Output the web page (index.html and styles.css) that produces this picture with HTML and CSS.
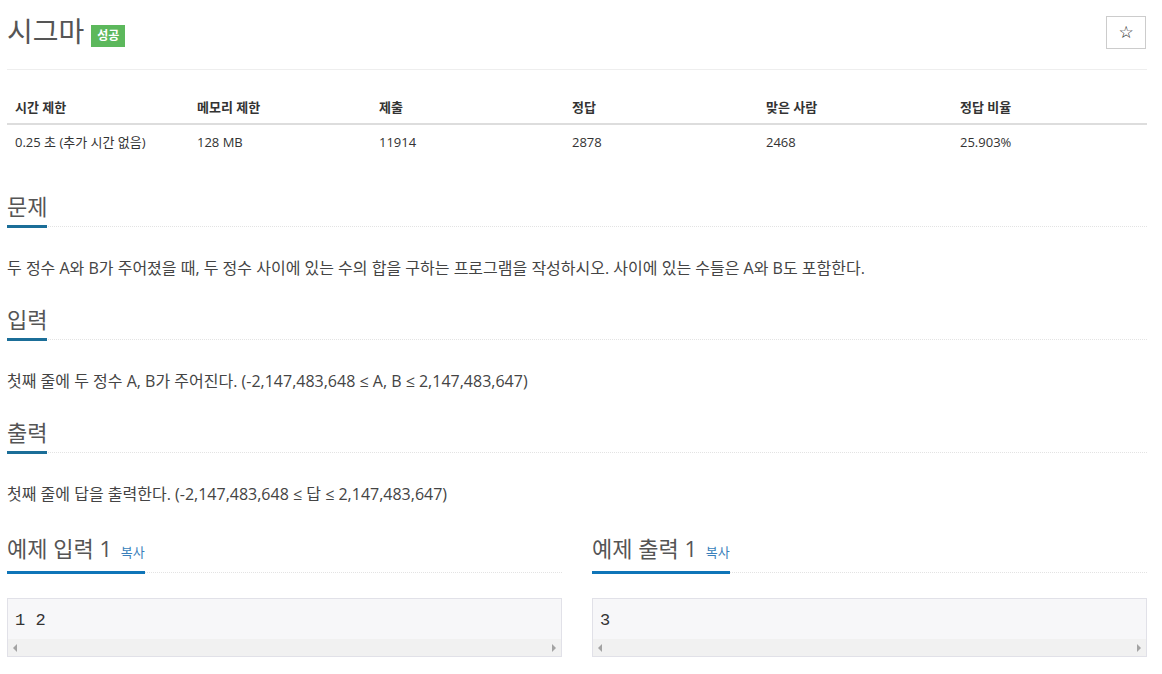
FILE: index.html
```html
<!DOCTYPE html>
<html lang="ko">
<head>
<meta charset="utf-8">
<title>시그마</title>
<link rel="stylesheet" href="styles.css">
</head>
<body>
<div class="container">
  <div class="page-header">
    <h1 class="title">시그마 <span class="badge">성공</span></h1>
    <button class="star-btn" type="button">☆</button>
  </div>
  <hr class="divider">
  <table class="info">
    <colgroup>
      <col class="c1"><col class="c2"><col class="c3"><col class="c4"><col class="c5"><col class="c6">
    </colgroup>
    <thead>
      <tr><th>시간 제한</th><th>메모리 제한</th><th>제출</th><th>정답</th><th>맞은 사람</th><th>정답 비율</th></tr>
    </thead>
    <tbody>
      <tr><td>0.25 초 (추가 시간 없음)</td><td>128 MB</td><td>11914</td><td>2878</td><td>2468</td><td>25.903%</td></tr>
    </tbody>
  </table>

  <section class="section">
    <div class="headline"><h2>문제</h2></div>
    <p class="text">두 정수 A와 B가 주어졌을 때, 두 정수 사이에 있는 수의 합을 구하는 프로그램을 작성하시오. 사이에 있는 수들은 A와 B도 포함한다.</p>
  </section>
  <section class="section">
    <div class="headline"><h2>입력</h2></div>
    <p class="text">첫째 줄에 두 정수 A, B가 주어진다. (-2,147,483,648 ≤ A, B ≤ 2,147,483,647)</p>
  </section>
  <section class="section">
    <div class="headline"><h2>출력</h2></div>
    <p class="text">첫째 줄에 답을 출력한다. (-2,147,483,648 ≤ 답 ≤ 2,147,483,647)</p>
  </section>

  <div class="samples">
    <section class="sample">
      <div class="headline"><h2>예제 입력 1 <a class="copy" href="#">복사</a></h2></div>
      <div class="sampledata">
        <pre>1 2</pre>
        <div class="hscroll"><span class="arrow left"></span><span class="arrow right"></span></div>
      </div>
    </section>
    <section class="sample">
      <div class="headline"><h2>예제 출력 1 <a class="copy" href="#">복사</a></h2></div>
      <div class="sampledata">
        <pre>3</pre>
        <div class="hscroll"><span class="arrow left"></span><span class="arrow right"></span></div>
      </div>
    </section>
  </div>
</div>
</body>
</html>
```
FILE: styles.css
```css
* { box-sizing: border-box; }
html, body { margin: 0; padding: 0; background: #fff; }
body {
  font-family: "Open Sans", "Noto Sans CJK KR", sans-serif;
  color: #333;
  font-size: 13px;
  line-height: 1.42857;
}
.container {
  width: 1140px;
  margin-left: 7px;
}
.page-header {
  display: flex;
  justify-content: space-between;
  align-items: flex-start;
  padding-top: 14px;
}
.title {
  margin: 0;
  font-size: 28px;
  font-weight: 400;
  line-height: 34px;
  color: #555;
  display: flex;
  align-items: center;
  gap: 7px;
}
.badge {
  display: inline-block;
  background: #5cb85c;
  color: #fff;
  font-size: 12px;
  font-weight: 700;
  line-height: 22px;
  height: 22px;
  padding: 0 6px;
  margin-top: 10px;
}
.star-btn {
  width: 40px;
  height: 33px;
  margin-top: 2px;
  margin-right: 1px;
  background: #fff;
  border: 1px solid #ccc;
  font-size: 17px;
  line-height: 1;
  color: #222;
  font-family: "DejaVu Sans", sans-serif;
  padding: 0;
}
.divider {
  border: 0;
  border-top: 1px solid #eee;
  margin: 20px 0 20px 0;
}
.info {
  width: 1140px;
  border-collapse: collapse;
  table-layout: fixed;
}
.c1 { width: 182px; }
.c2 { width: 182px; }
.c3 { width: 193px; }
.c4 { width: 194px; }
.c5 { width: 194px; }
.c6 { width: 195px; }
.info th, .info td {
  text-align: left;
  padding: 8px;
  font-size: 13px;
  line-height: 18px;
}
.info th {
  font-weight: 700;
  padding-bottom: 7px;
  border-bottom: 2px solid #ddd;
}
.info + .section { margin-top: 35px; }
.headline {
  border-bottom: 1px dotted #e3e3e3;
}
.headline h2 {
  display: inline-block;
  margin: 0 0 -2px 0;
  font-size: 22px;
  font-weight: 400;
  line-height: 24px;
  color: #555;
  padding-bottom: 7px;
  border-bottom: 3px solid #1b6e98;
}
.text {
  margin: 29px 0 27px 0;
  font-size: 16px;
  line-height: 24px;
  color: #444;
}
.samples {
  display: flex;
  gap: 30px;
  margin-top: 30px;
}
.sample { flex: 1 1 0; }
.sample .headline h2 { border-bottom-color: #0f75b8; }
.copy {
  font-size: 13px;
  color: #3a7fbb;
  text-decoration: none;
  margin-left: 3px;
}
.sampledata {
  margin-top: 25px;
  border: 1px solid #e1e1e8;
  background: #f7f7f9;
}
.sampledata pre {
  margin: 0;
  padding: 11px 7px 8px;
  font-family: "Liberation Mono", monospace;
  font-size: 17px;
  line-height: 21px;
  color: #333;
}
.hscroll {
  height: 17px;
  background: #f1f1f1;
  display: flex;
  justify-content: space-between;
  align-items: center;
  padding: 0 5px;
}
.arrow {
  width: 0;
  height: 0;
  border-top: 4px solid transparent;
  border-bottom: 4px solid transparent;
}
.arrow.left { border-right: 4px solid #a3a3a3; }
.arrow.right { border-left: 4px solid #a3a3a3; }
```
